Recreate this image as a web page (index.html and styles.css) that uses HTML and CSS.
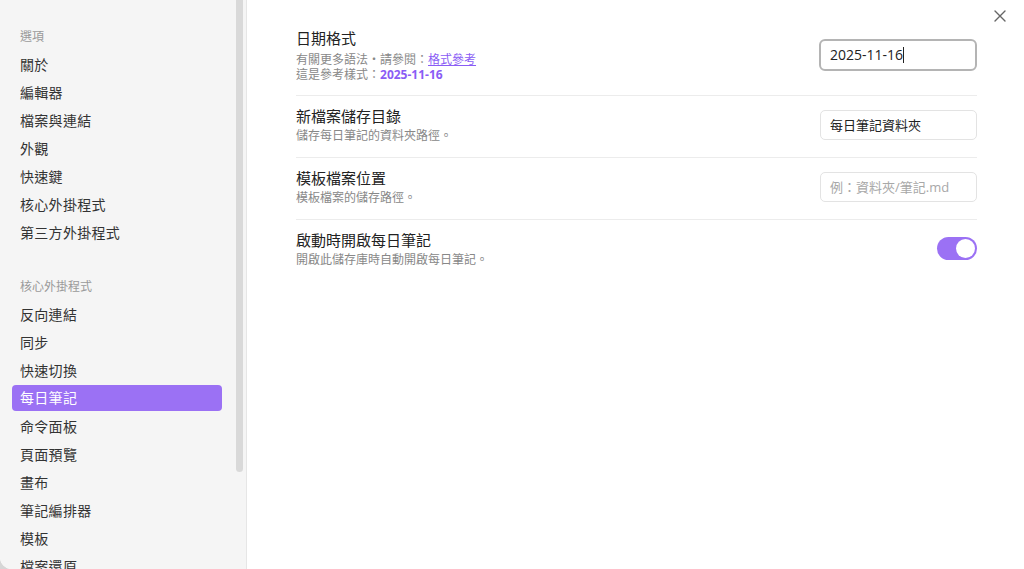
FILE: index.html
```html
<!DOCTYPE html>
<html lang="zh-Hant">
<head>
  <meta charset="UTF-8" />
  <title>設定 - 每日筆記</title>
  <link rel="stylesheet" href="styles.css">
</head>
<body>
  <div class="modal">
    <aside class="sidebar">
      <div class="nav-group">
        <div class="nav-title">選項</div>
        <a class="nav-item">關於</a>
        <a class="nav-item">編輯器</a>
        <a class="nav-item">檔案與連結</a>
        <a class="nav-item">外觀</a>
        <a class="nav-item">快速鍵</a>
        <a class="nav-item">核心外掛程式</a>
        <a class="nav-item">第三方外掛程式</a>
      </div>
      <div class="nav-group">
        <div class="nav-title">核心外掛程式</div>
        <a class="nav-item">反向連結</a>
        <a class="nav-item">同步</a>
        <a class="nav-item">快速切換</a>
        <a class="nav-item active">每日筆記</a>
        <a class="nav-item">命令面板</a>
        <a class="nav-item">頁面預覽</a>
        <a class="nav-item">畫布</a>
        <a class="nav-item">筆記編排器</a>
        <a class="nav-item">模板</a>
        <a class="nav-item">檔案還原</a>
        <a class="nav-item">大綱</a>
      </div>
      <div class="scroll-thumb"></div>
    </aside>

    <main class="content">
      <div class="setting-item first">
        <div class="setting-info">
          <div class="setting-name">日期格式</div>
          <div class="setting-desc">
            有關更多語法・請參閱：<a href="#" class="link">格式參考</a><br>
            這是參考樣式：<b class="sample">2025-11-16</b>
          </div>
        </div>
        <div class="setting-control">
          <div class="input focused">2025-11-16<span class="caret"></span></div>
        </div>
      </div>

      <div class="setting-item">
        <div class="setting-info">
          <div class="setting-name">新檔案儲存目錄</div>
          <div class="setting-desc">儲存每日筆記的資料夾路徑。</div>
        </div>
        <div class="setting-control">
          <div class="input">每日筆記資料夾</div>
        </div>
      </div>

      <div class="setting-item">
        <div class="setting-info">
          <div class="setting-name">模板檔案位置</div>
          <div class="setting-desc">模板檔案的儲存路徑。</div>
        </div>
        <div class="setting-control">
          <div class="input placeholder">例：資料夾/筆記.md</div>
        </div>
      </div>

      <div class="setting-item no-border">
        <div class="setting-info">
          <div class="setting-name">啟動時開啟每日筆記</div>
          <div class="setting-desc">開啟此儲存庫時自動開啟每日筆記。</div>
        </div>
        <div class="setting-control">
          <div class="toggle on"><span class="knob"></span></div>
        </div>
      </div>
    </main>

    <button class="close-btn" aria-label="關閉">
      <svg width="12" height="12" viewBox="0 0 12 12"><path d="M1 1L11 11M11 1L1 11" stroke="#666" stroke-width="1.4" stroke-linecap="round"/></svg>
    </button>
  </div>
</body>
</html>
```

FILE: styles.css
```css
* {
  margin: 0;
  padding: 0;
  box-sizing: border-box;
}

html, body {
  width: 1024px;
  height: 569px;
  overflow: hidden;
  background: #d6d6d6;
  font-family: "Open Sans", "Noto Sans CJK TC", sans-serif;
  color: #222;
}

.modal {
  position: relative;
  display: flex;
  width: 1024px;
  height: 569px;
  background: #ffffff;
  border-bottom-left-radius: 12px;
  overflow: hidden;
}

/* Sidebar */
.sidebar {
  position: relative;
  flex: 0 0 247px;
  height: 100%;
  background: #f5f5f5;
  border-right: 1px solid #e6e6e6;
  padding: 27px 24px 0 12px;
  overflow: hidden;
}

.nav-group {
  margin-bottom: 30px;
}

.nav-title {
  font-size: 12px;
  line-height: 20px;
  color: #9a9a9a;
  padding-left: 8px;
  margin-bottom: 4px;
}

.nav-item {
  display: block;
  font-size: 14px;
  line-height: 24px;
  height: 28px;
  padding: 2px 8px;
  color: #333;
  border-radius: 4px;
  letter-spacing: 0.3px;
  cursor: pointer;
}

.nav-item.active {
  background: #9b71f4;
  color: #ffffff;
  height: 26px;
  padding: 1px 8px;
  margin-bottom: 2px;
}

.scroll-thumb {
  position: absolute;
  top: 0;
  right: 3px;
  width: 7px;
  height: 472px;
  background: #d9d9d9;
  border-radius: 0 0 4px 4px;
}

/* Content */
.content {
  flex: 1;
  padding: 18px 47px 0 49px;
}

.setting-item {
  display: flex;
  justify-content: space-between;
  align-items: center;
  padding: 10px 0 14px;
  border-bottom: 1px solid #ececec;
}

.setting-item.first {
  padding-bottom: 13px;
}

.setting-item.no-border {
  border-bottom: none;
}

.setting-name {
  font-size: 15px;
  line-height: 20px;
  color: #222;
}

.setting-desc {
  font-size: 12px;
  line-height: 15px;
  color: #888;
  margin-top: 2px;
}

.setting-item.first .setting-desc {
  margin-top: 4px;
}

.link {
  color: #8a5cf5;
  text-decoration: underline;
}

.sample {
  color: #8a5cf5;
  font-weight: 700;
}

.input {
  width: 157px;
  height: 30px;
  font-size: 13px;
  line-height: 28px;
  padding: 0 9px;
  color: #222;
  background: #fff;
  border: 1px solid #e3e3e3;
  border-radius: 5px;
}

.input.focused {
  height: 32px;
  width: 158px;
  font-size: 14px;
  line-height: 28px;
  padding: 0 9px;
  border: 2px solid #b4b4b4;
  border-radius: 6px;
}

.caret {
  display: inline-block;
  width: 1px;
  height: 16px;
  background: #222;
  vertical-align: -3px;
}

.input.placeholder {
  color: #a8a8a8;
}

.toggle {
  width: 40px;
  height: 23px;
  border-radius: 12px;
  background: #9b71f4;
  padding: 2px;
  display: flex;
  justify-content: flex-end;
}

.knob {
  width: 19px;
  height: 19px;
  border-radius: 50%;
  background: #fff;
}

.close-btn {
  position: absolute;
  top: 10px;
  right: 18px;
  width: 12px;
  height: 12px;
  border: none;
  background: transparent;
  cursor: pointer;
}
```
